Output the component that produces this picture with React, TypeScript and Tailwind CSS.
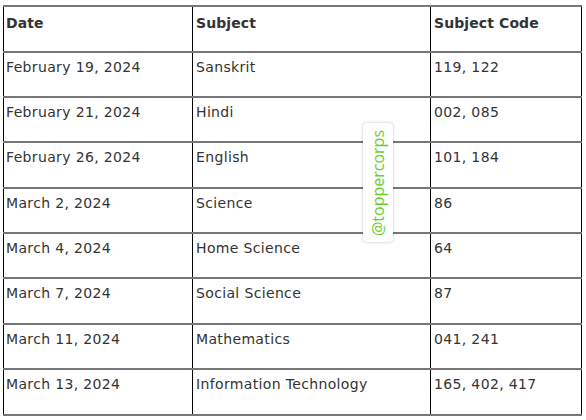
const rows = [
  ["February 19, 2024", "Sanskrit", "119, 122"],
  ["February 21, 2024", "Hindi", "002, 085"],
  ["February 26, 2024", "English", "101, 184"],
  ["March 2, 2024", "Science", "86"],
  ["March 4, 2024", "Home Science", "64"],
  ["March 7, 2024", "Social Science", "87"],
  ["March 11, 2024", "Mathematics", "041, 241"],
  ["March 13, 2024", "Information Technology", "165, 402, 417"],
];

export default function App() {
  return (
    <div className="relative h-[420px] w-[586px] bg-white pl-[3px] pt-[5px] font-['DejaVu_Sans',sans-serif] text-[14px] tracking-[0.35px] text-[#333]">
      <table className="w-[578px] table-fixed border-collapse border-b-2 border-l border-r border-t-2 border-b-[#777] border-l-black border-r-black border-t-[#777]">
        <colgroup>
          <col className="w-[189px]" />
          <col className="w-[238px]" />
          <col className="w-[151px]" />
        </colgroup>
        <thead>
          <tr className="h-[45.5px] border-b-2 border-[#777]">
            {["Date", "Subject", "Subject Code"].map((h, i) => (
              <th
                key={h}
                className={`pr-[2px] pt-[6px] text-left align-top font-bold tracking-[0.1px] ${i > 0 ? "border-l border-black pl-[3px]" : "pl-[2px]"}`}
              >
                {h}
              </th>
            ))}
          </tr>
        </thead>
        <tbody>
          {rows.map((r) => (
            <tr key={r[0]} className="h-[45.4px] border-b-2 border-[#777] last:border-b-0">
              {r.map((c, i) => (
                <td
                  key={i}
                  className={`pr-[2px] pt-[4px] align-top ${i > 0 ? "border-l border-black pl-[3px]" : "pl-[2px]"}`}
                >
                  {c}
                </td>
              ))}
            </tr>
          ))}
        </tbody>
      </table>
      <div className="absolute left-[363px] top-[123px] flex h-[119px] w-[30px] items-center justify-center rounded bg-white shadow-[0_0_3px_rgba(0,0,0,0.25)]">
        <span className="-rotate-90 whitespace-nowrap font-['Open_Sans',sans-serif] text-[16px] tracking-normal text-[#6ccc2c]">
          @toppercorps
        </span>
      </div>
    </div>
  );
}
